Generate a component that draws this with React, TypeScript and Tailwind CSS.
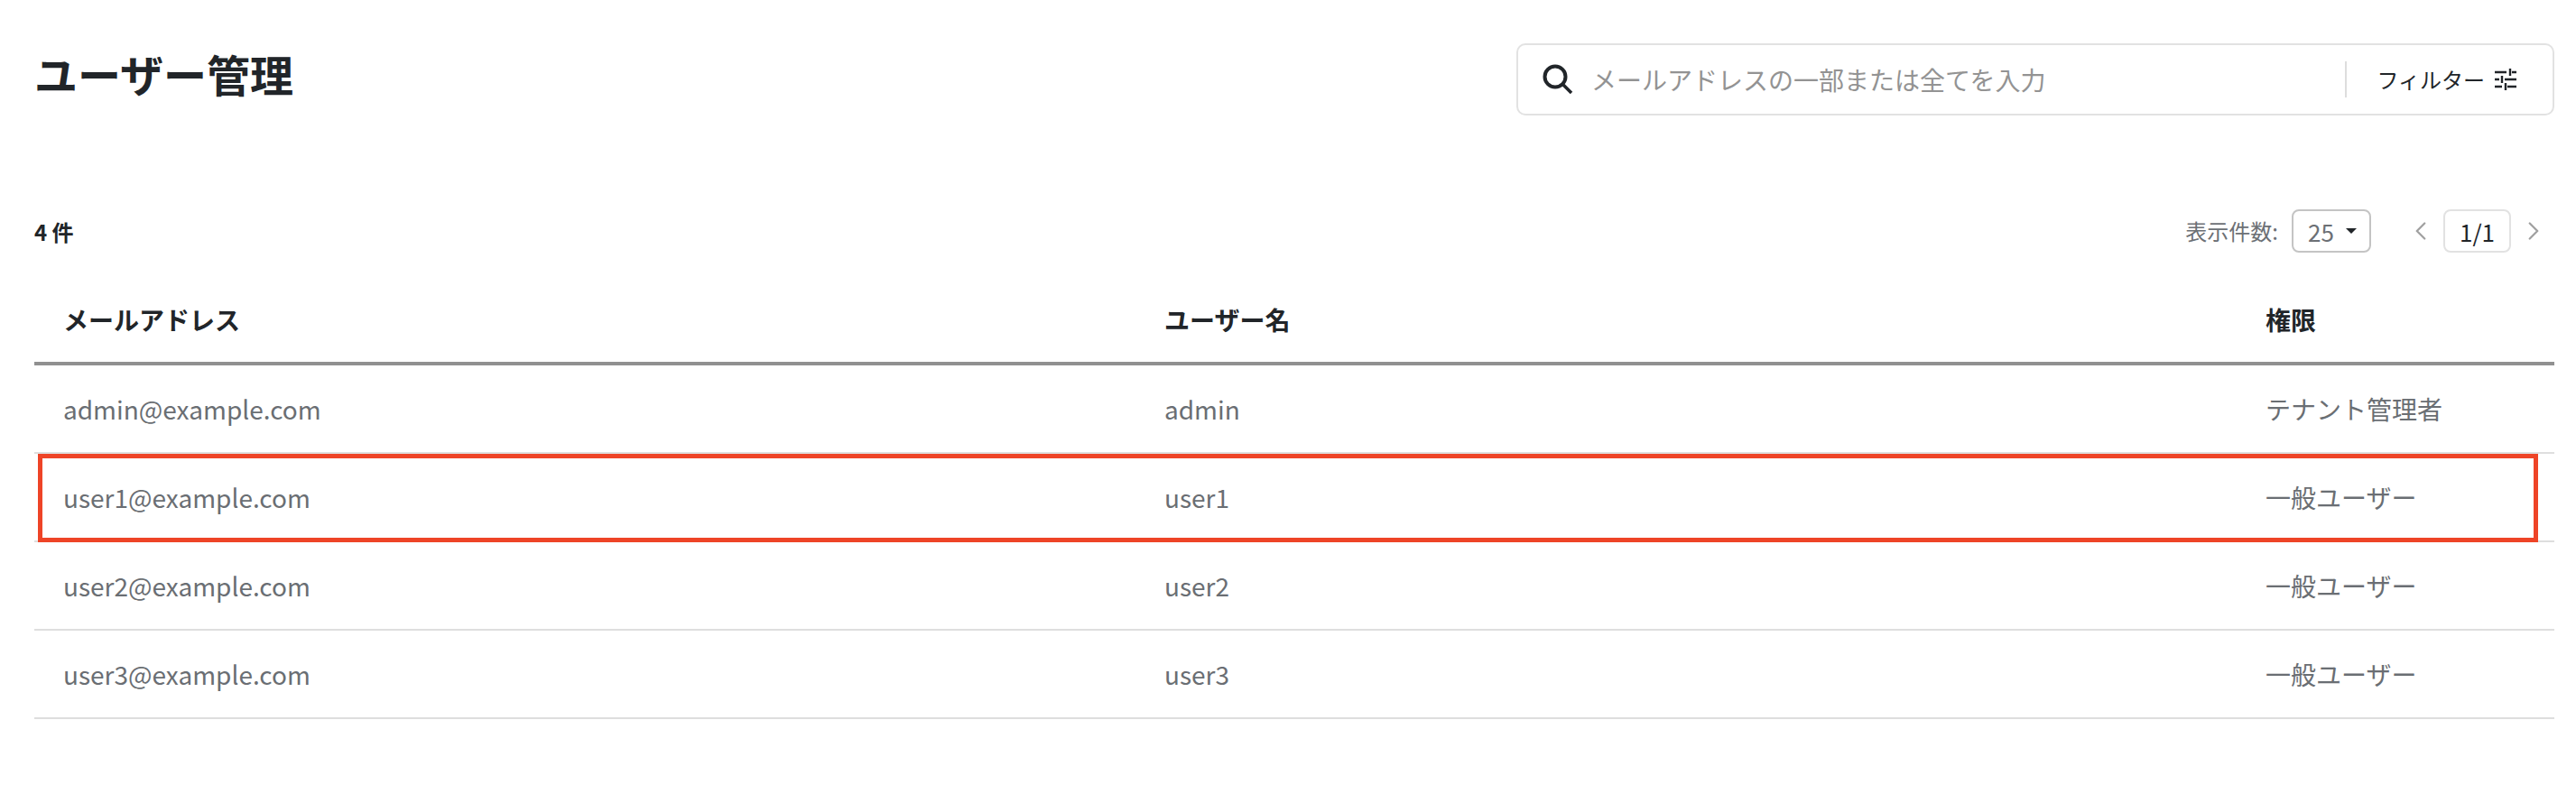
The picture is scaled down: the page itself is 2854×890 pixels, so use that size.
import React from 'react';
import { ChevronLeft, ChevronRight } from 'lucide-react';

const rows = [
  { email: 'admin@example.com', name: 'admin', role: 'テナント管理者' },
  { email: 'user1@example.com', name: 'user1', role: '一般ユーザー', marked: true },
  { email: 'user2@example.com', name: 'user2', role: '一般ユーザー' },
  { email: 'user3@example.com', name: 'user3', role: '一般ユーザー' },
];

function SearchIcon() {
  return (
    <svg width="34" height="34" viewBox="0 0 34 34" fill="none" stroke="#212529" className="shrink-0">
      <circle cx="14" cy="14" r="11.5" strokeWidth="4" />
      <path d="M22.5 22.5 L32 32" strokeWidth="3.5" />
    </svg>
  );
}

function SlidersIcon() {
  return (
    <svg width="24" height="24" viewBox="0 0 24 24" fill="none" stroke="#212529" strokeWidth="2.4" className="shrink-0">
      <path d="M0 4H13M19 4H24M0 12H5M11 12H24M0 20H8M14 20H24" />
      <path d="M17 0V8M8 8V16M12 16V24" />
    </svg>
  );
}

export default function App() {
  return (
    <div className="w-[2854px] h-[890px] bg-white pl-[38px] pr-[24px] text-[#212529] font-['Noto_Sans_CJK_JP','Noto_Sans',sans-serif]">
      <div className="flex items-start justify-between pt-[48px] h-[228px]">
        <h1 className="text-[48px] leading-[66px] font-bold">ユーザー管理</h1>
        <div className="flex items-center w-[1150px] h-[80px] rounded-[10px] border-2 border-[#e2e2e2] pl-[27px] pr-[40px]">
          <SearchIcon />
          <span className="ml-[20px] flex-1 text-[28px] text-[#939393]">メールアドレスの一部または全てを入力</span>
          <div className="w-[2px] h-[40px] bg-[#dddddd] mr-[33px]" />
          <span className="text-[24px] mr-[11px]">フィルター</span>
          <SlidersIcon />
        </div>
      </div>

      <div>
        <div className="flex items-center justify-between h-[58px]">
          <span className="text-[24px] font-bold [font-feature-settings:'palt']">4 件</span>
          <div className="flex items-center -translate-y-px">
            <span className="text-[24px] text-[#6c7075]">表示件数:</span>
            <div className="flex items-center justify-between w-[88px] h-[48px] ml-[15px] pl-[16px] pr-[14px] rounded-[8px] border-2 border-[#c4c4c4] text-[26px] text-[#6c7075]">
              25
              <span className="w-0 h-0 border-x-[6px] border-t-[6px] border-x-transparent border-t-[#212529]" />
            </div>
            <ChevronLeft className="ml-[38px] text-[#a0a0a0]" size={34} strokeWidth={1.6} />
            <div className="flex items-center justify-center w-[75px] h-[48px] mx-[8px] rounded-[8px] border-2 border-[#e2e2e2] text-[26px]">1/1</div>
            <ChevronRight className="mr-[6px] text-[#a0a0a0]" size={34} strokeWidth={1.6} />
          </div>
        </div>

        <div className="grid grid-cols-[1220px_1220px_1fr] items-center box-content h-[61px] pb-[17px] pl-[32px] mt-[37px] border-b-4 border-[#909090] text-[28px] font-bold">
          <span>メールアドレス</span>
          <span>ユーザー名</span>
          <span>権限</span>
        </div>

        {rows.map((row) => (
          <div key={row.email} className="relative grid grid-cols-[1220px_1220px_1fr] items-center h-[98px] pl-[32px] border-b-2 border-[#dedede] text-[28px] text-[#6a6e73]">
            <span>{row.email}</span>
            <span>{row.name}</span>
            <span>{row.role}</span>
            {row.marked && (
              <div className="absolute left-[4px] top-0 w-[2770px] h-[98px] border-[5px] border-[#ee4427]" />
            )}
          </div>
        ))}
      </div>
    </div>
  );
}
